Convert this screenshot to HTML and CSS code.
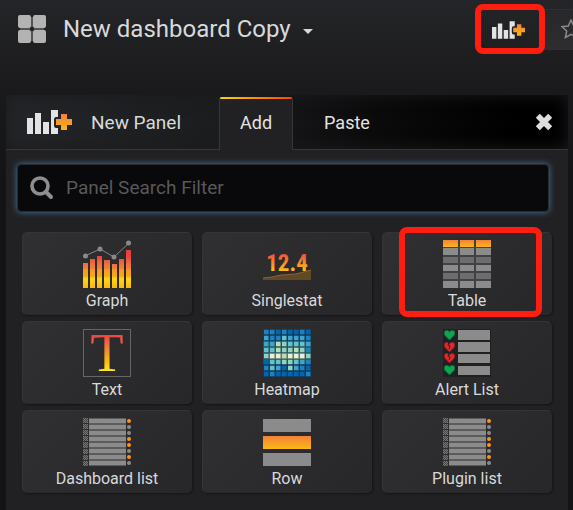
FILE: index.html
```html
<!DOCTYPE html>
<html lang="en">
<head>
<meta charset="utf-8">
<meta name="viewport" content="width=device-width, initial-scale=1">
<title>New dashboard Copy</title>
<link rel="stylesheet" href="styles.css">
</head>
<body>
<svg class="defs" width="0" height="0" aria-hidden="true">
  <defs>
    <linearGradient id="warm" x1="0" y1="0" x2="0" y2="1">
      <stop offset="0" stop-color="#f2803c"/><stop offset="1" stop-color="#fdb813"/>
    </linearGradient>
    <linearGradient id="plus" gradientUnits="userSpaceOnUse" x1="0" y1="4" x2="0" y2="20">
      <stop offset="0" stop-color="#f0803c"/><stop offset="1" stop-color="#fbb713"/>
    </linearGradient>
    <linearGradient id="fire" gradientUnits="userSpaceOnUse" x1="0" y1="5" x2="0" y2="43">
      <stop offset="0" stop-color="#ec4040"/><stop offset=".4" stop-color="#f2843a"/><stop offset=".75" stop-color="#fdc00c"/><stop offset="1" stop-color="#ffe92c"/>
    </linearGradient>
    <linearGradient id="stat" gradientUnits="userSpaceOnUse" x1="0" y1="13" x2="0" y2="32">
      <stop offset="0" stop-color="#ec4b3c"/><stop offset=".5" stop-color="#f58a2c"/><stop offset="1" stop-color="#ffc60e"/>
    </linearGradient>
    <linearGradient id="bars" gradientUnits="userSpaceOnUse" x1="0" y1="9" x2="0" y2="48">
      <stop offset="0" stop-color="#e93a3c"/><stop offset=".2" stop-color="#e9463c"/><stop offset=".38" stop-color="#ec703a"/><stop offset=".5" stop-color="#f0803a"/><stop offset=".54" stop-color="#f79a20"/><stop offset=".7" stop-color="#fba81a"/><stop offset=".76" stop-color="#ffd80c"/><stop offset="1" stop-color="#fdb515"/>
    </linearGradient>
    <pattern id="hatch" width="2" height="2" patternUnits="userSpaceOnUse">
      <rect width="2" height="2" fill="#444"/><path d="M0 0h1v1H0zM1 1h1v1H1z" fill="#777"/>
    </pattern>
    <symbol id="add-panel" viewBox="0 0 45 24">
      <path d="M0 8h6v16H0zM8 3h6v21H8zM16 12h6v12h-6zM24 0h7v7h-2q-2 0-2 3v5q0 3 2 3h2v6h-7z" fill="#e3e3e3"/>
      <path d="M34 4h6v5h5v6h-5v5h-6v-5h-5V9h5z" fill="url(#plus)"/>
    </symbol>
    <symbol id="list" viewBox="0 0 48 48">
      <path d="M0 0h5v5H0zM0 6h5v5H0zM0 12h5v5H0zM0 18h5v5H0zM0 24h5v6H0zM0 31h5v5H0zM0 37h5v5H0zM0 43h5v5H0z" fill="url(#hatch)"/>
      <path d="M6 .5h37v5H6zM6 6.500h37v5H6zM6 12.500h37v5H6zM6 18.500h37v5H6zM6 24.500h37v5H6zM6 30.500h37v5H6zM6 36.500h37v5H6zM6 42.500h37v5H6z" fill="#8b8b8b"/>
      <g fill="#ff9416"><circle cx="46" cy="3" r="2"/><circle cx="46" cy="21" r="2"/><circle cx="46" cy="27" r="2"/><circle cx="46" cy="39" r="2"/></g>
      <g fill="#8b8b8b"><circle cx="46" cy="9" r="2"/><circle cx="46" cy="15" r="2"/><circle cx="46" cy="33" r="2"/><circle cx="46" cy="45" r="2"/></g>
    </symbol>
    <symbol id="heart" viewBox="0 0 12 11"><path d="M6 11L1 6Q-1 3 1 1Q4-1 6 2Q8-1 11 1Q13 3 11 6z"/></symbol>
  </defs>
</svg>

<header class="topbar">
  <button class="title" type="button">
    <svg class="title-icon" viewBox="0 0 28 28"><g fill="#b3b3b3"><rect width="13" height="13" rx="2"/><rect x="15" width="13" height="13" rx="2"/><rect y="15" width="13" height="13" rx="2"/><rect x="15" y="15" width="13" height="13" rx="2"/><path d="M2 13h10v2H2zM16 13h10v2H16zM13 2h2v10h-2zM13 16h2v10h-2z" opacity=".35"/></g></svg>
    <span>New dashboard Copy</span>
    <svg class="caret" viewBox="0 0 10 5"><path d="M0 0h10L5 5z" fill="#d8d9da"/></svg>
  </button>
  <div class="actions">
    <button class="action marked" type="button" aria-label="Add panel"><svg class="action-icon"><use href="#add-panel"/></svg></button>
    <button class="action star" type="button" aria-label="Star dashboard"><svg class="star-icon" viewBox="0 0 20 20"><path d="M10 1l2.700 6 6.300.7-4.700 4.300 1.300 6.500L10 15.300 4.400 18.500 5.700 12 1 7.700 7.300 7z" fill="none" stroke="#8a8a8c" stroke-width="1.500"/></svg></button>
  </div>
</header>

<main class="panel">
  <div class="panel-head">
    <svg class="panel-icon"><use href="#add-panel"/></svg>
    <h1>New Panel</h1>
    <nav class="tabs">
      <a class="tab active" href="#add">Add</a>
      <a class="tab" href="#paste">Paste</a>
    </nav>
    <button class="close" type="button" aria-label="Close"><svg viewBox="0 0 16 16"><path d="M2.500 2.500l11 11M13.500 2.500l-11 11" stroke="#dedede" stroke-width="5"/></svg></button>
  </div>

  <div class="panel-body">
    <label class="search">
      <svg viewBox="0 0 24 24"><circle cx="10" cy="10" r="8" fill="none" stroke="#8e8e8e" stroke-width="3.600"/><path d="M16 16l5 5" stroke="#8e8e8e" stroke-width="4" stroke-linecap="round"/></svg>
      <input type="text" placeholder="Panel Search Filter" aria-label="Panel Search Filter">
    </label>

    <div class="tiles">
      <button class="tile" type="button">
        <svg viewBox="0 0 48 48">
          <path d="M0 23h5v25H0zM7 19h5v29H7zM14 16h5v32h-5zM21 20h6v28h-6zM29 24h5v24h-5zM36 19h5v29h-5zM43 10h5v38h-5z" fill="url(#bars)"/>
          <path d="M2 16l15-7 14 8L46 3" fill="none" stroke="#858585"/>
          <g fill="#898989"><circle cx="2.500" cy="16" r="2.500"/><circle cx="17" cy="9" r="2.500"/><circle cx="31" cy="17" r="2.500"/><circle cx="45.500" cy="3" r="2.500"/></g>
        </svg>
        <span>Graph</span>
      </button>
      <button class="tile" type="button">
        <svg viewBox="0 0 48 48">
          <text class="stat-digits" x="24" y="31" text-anchor="middle" fill="url(#stat)">12.4</text>
          <path d="M0 38l9-1 9-2 15-1 15-4v10H0z" fill="#604a26"/><path d="M0 38l9-1 9-2 15-1 15-4" fill="none" stroke="#936032"/>
        </svg>
        <span>Singlestat</span>
      </button>
      <button class="tile marked" type="button">
        <svg viewBox="0 0 48 48">
          <path d="M0 0h48v48H0z" fill="#414141"/>
          <path d="M0 0h15v7H0zM17 0h14v7H17zM33 0h15v7H33z" fill="url(#warm)"/>
          <path d="M0 8h15v7H0zM17 8h14v7H17zM33 8h15v7H33zM0 25h15v6H0zM17 25h14v6H17zM33 25h15v6H33zM0 41h15v7H0zM17 41h14v7H17zM33 41h15v7H33z" fill="#8b8b8b"/>
          <path d="M0 17h15v6H0zM17 17h14v6H17zM33 17h15v6H33zM0 33h15v6H0zM17 33h14v6H17zM33 33h15v6H33z" fill="#6c6d71"/>
        </svg>
        <span>Table</span>
      </button>
      <button class="tile" type="button">
        <svg viewBox="0 0 48 48">
          <rect x=".5" y=".5" width="47" height="47" fill="none" stroke="#666"/>
          <text class="serif-t" x="24" y="42" text-anchor="middle" fill="url(#fire)">T</text>
        </svg>
        <span>Text</span>
      </button>
      <button class="tile" type="button">
        <svg viewBox="0 0 48 48">
          <path d="M0 0h48v48H0z" fill="#103b58"/><path d="M0 12h48v23H0z" fill="#28555c"/><path d="M6 24h36v6H6z" fill="#627565"/>
          <g fill="none" stroke-width="4.500">
            <path stroke="#0464ad" d="M13 3h4.500M25 3h4.500M31 3h4.500M43 3h4.500M1 33h4.500M19 39h4.500M43 39h4.500M1 45h4.500M13 45h4.500M19 45h4.500M25 45h4.500M31 45h4.500M37 45h4.500"/>
            <path stroke="#1b83c2" d="M1 3h4.500M7 3h4.500M19 3h4.500M37 3h4.500M7 9h4.500M13 9h4.500M43 9h4.500M43 21h4.500M43 33h4.500M1 39h4.500M37 39h4.500M7 45h4.500M43 45h4.500"/>
            <path stroke="#3ba4d0" d="M1 9h4.500M25 9h4.500M31 9h4.500M37 9h4.500M1 15h4.500M7 15h4.500M43 15h4.500M13 39h4.500M31 39h4.500M37 33h4.500"/>
            <path stroke="#64c2cd" d="M19 9h4.500M25 15h4.500M31 15h4.500M37 15h4.500M1 21h4.500M7 21h4.500M7 33h4.500M13 33h4.500M31 33h4.500M7 39h4.500"/>
            <path stroke="#91d3bd" d="M19 15h4.500M19 21h4.500M25 21h4.500M37 21h4.500M1 27h4.500M43 27h4.500M19 33h4.500M25 33h4.500M25 39h4.500"/>
            <path stroke="#b7deb8" d="M13 15h4.500M13 21h4.500M31 21h4.500M19 27h4.500"/>
            <path stroke="#e4f1dc" d="M7 27h4.500M13 27h4.500M25 27h4.500M31 27h4.500M37 27h4.500"/>
          </g>
        </svg>
        <span>Heatmap</span>
      </button>
      <button class="tile" type="button">
        <svg viewBox="0 0 48 48">
          <path d="M0 0h48v48H0z" fill="#202020"/>
          <path d="M15 1h32v10H15zM15 13h32v10H15zM15 25h32v9H15zM15 37h32v9H15z" fill="#8b8b8b"/>
          <g fill="#0ca552" stroke="#15673b"><use href="#heart" x="1" y="1" width="11" height="10"/><use href="#heart" x="1" y="36" width="11" height="10"/></g>
          <g fill="#e6252c" stroke="#7b2428"><use href="#heart" x="1" y="13" width="11" height="10"/><use href="#heart" x="1" y="24" width="11" height="10"/></g>
          <path d="M6 13l-1 3 2 1-1 3M6 24l-1 3 2 1-1 3" fill="none" stroke="#202020"/>
        </svg>
        <span>Alert List</span>
      </button>
      <button class="tile" type="button"><svg><use href="#list"/></svg><span>Dashboard list</span></button>
      <button class="tile" type="button">
        <svg viewBox="0 0 48 48"><path d="M0 1h48v13H0zM0 35h48v13H0z" fill="#8b8b8b"/><path d="M0 18h48v13H0z" fill="url(#warm)"/></svg>
        <span>Row</span>
      </button>
      <button class="tile" type="button"><svg><use href="#list"/></svg><span>Plugin list</span></button>
    </div>
  </div>
</main>
</body>
</html>
```
FILE: styles.css
```css
* { box-sizing: border-box; }

body {
  margin: 0;
  min-height: 100vh;
  display: flex;
  flex-direction: column;
  overflow-x: hidden;
  background: #161719 linear-gradient(#242528, #1a1a1c 90px, #141416 180px) no-repeat;
  color: #d8d9da;
  font-family: Roboto, "Liberation Sans", sans-serif;
  font-size: 16px;
}

button {
  border: 0;
  padding: 0;
  background: none;
  color: inherit;
  font: inherit;
}

svg { display: block; flex: none; }
.defs { position: absolute; }

.topbar {
  display: flex;
  justify-content: space-between;
  align-items: flex-start;
  padding: 9px 0 0 18px;
  height: 95px;
  overflow: hidden;
}

.title {
  display: flex;
  align-items: center;
  height: 40px;
  font-size: 24px;
  white-space: nowrap;
}

.title-icon { width: 28px; height: 28px; margin-right: 17px; }
.caret { width: 10px; height: 5px; margin: 4px 0 0 12px; }

.actions { display: flex; margin-right: -24px; }

.action {
  display: flex;
  align-items: center;
  justify-content: center;
  height: 41px;
  width: 69px;
  padding-right: 2px;
}

.action-icon { width: 33px; height: 18px; }

.star {
  width: 53px;
  padding: 0 0 3px;
  background: linear-gradient(#28282b, #2e2e31);
  border-top: 1px solid #303033;
}

.star-icon { width: 20px; height: 20px; }

.marked { position: relative; }

.marked::after {
  content: "";
  position: absolute;
  inset: -5px -1px -4px 0;
  border: 6px solid #ff1d10;
  border-radius: 8px;
}

.panel {
  flex: 1;
  display: flex;
  flex-direction: column;
  margin: 0 5px 0 6px;
  background: #212124;
}

.panel-head {
  display: flex;
  align-items: center;
  height: 55px;
  padding: 0 15px 0 21px;
  border-bottom: 1px solid #37373a;
  background: linear-gradient(to right, #232528, #1b1c1e 40%, #0b0b0c 65%, #000 92%);
  box-shadow: inset 0 0 16px #1b1b1d;
}

.panel-icon { width: 45px; height: 24px; }

h1 {
  margin: 0 0 0 19px;
  font-size: 19px;
  font-weight: 400;
  white-space: nowrap;
}

.tabs {
  align-self: flex-end;
  display: flex;
  margin: 0 auto -1px 38px;
}

.tab {
  height: 53px;
  padding: 0 20px;
  border: 1px solid transparent;
  border-bottom: 0;
  color: #e3e3e3;
  font-size: 18px;
  line-height: 50px;
  text-decoration: none;
}

.tab + .tab { margin-left: 10px; }

.active {
  border-color: transparent #37373a;
  border-radius: 3px 3px 0 0;
  background: linear-gradient(to right, #ffd500, #ff4400) top / 100% 2px no-repeat border-box, #212124;
}

.close svg { width: 18px; height: 18px; }

.panel-body { padding: 14px 16px 16px 16px; }

.search {
  display: flex;
  align-items: center;
  height: 48px;
  margin: 0 3px 20px -5px;
  padding: 0 12px;
  border: 1px solid #262e36;
  border-radius: 4px;
  background: #09090b;
  box-shadow: 0 0 6px #47759b;
}

.search svg { width: 24px; height: 24px; }

.search input {
  flex: 1;
  min-width: 0;
  margin-left: 12px;
  padding: 0 0 2px;
  border: 0;
  outline: 0;
  background: none;
  color: #d8d9da;
  font: inherit;
  font-size: 19px;
}

.search input::placeholder { color: #58585a; }

.tiles {
  display: grid;
  grid-template-columns: repeat(3, 1fr);
  gap: 6px 10px;
}

.tile {
  display: flex;
  flex-direction: column;
  align-items: center;
  height: 83px;
  padding-top: 7px;
  border: 1px solid #353538;
  border-right-color: #29292b;
  border-bottom-color: #29292b;
  border-radius: 5px;
  background: linear-gradient(135deg, #303032, #272729);
  box-shadow: 1px 1px 2px #151516;
}

.tile svg { width: 48px; height: 48px; overflow: visible; }
.tile span { margin-top: 3px; line-height: 20px; }
.tile.marked::after { inset: -6px 9px -3px 16px; }

.stat-digits { font: bold 23px "Liberation Sans Narrow", "Roboto Condensed", Roboto, sans-serif; }
.serif-t { font: 54px "Liberation Serif", serif; }
```
